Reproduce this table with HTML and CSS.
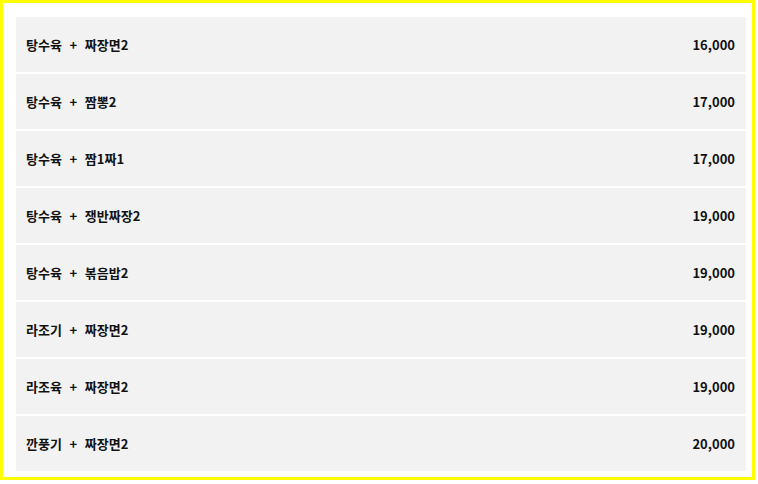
FILE: index.html
```html
<!DOCTYPE html>
<html lang="ko">
<head>
<meta charset="utf-8">
<link rel="stylesheet" href="styles.css">
</head>
<body>
<div class="frame">
  <ul class="menu">
    <li class="item"><span class="name">탕수육 + 짜장면2</span><span class="price">16,000</span></li>
    <li class="item"><span class="name">탕수육 + 짬뽕2</span><span class="price">17,000</span></li>
    <li class="item"><span class="name">탕수육 + 짬1짜1</span><span class="price">17,000</span></li>
    <li class="item"><span class="name">탕수육 + 쟁반짜장2</span><span class="price">19,000</span></li>
    <li class="item"><span class="name">탕수육 + 볶음밥2</span><span class="price">19,000</span></li>
    <li class="item"><span class="name">라조기 + 짜장면2</span><span class="price">19,000</span></li>
    <li class="item"><span class="name">라조육 + 짜장면2</span><span class="price">19,000</span></li>
    <li class="item"><span class="name">깐풍기 + 짜장면2</span><span class="price">20,000</span></li>
  </ul>
</div>
</body>
</html>
```

FILE: styles.css
```css
html, body {
  margin: 0;
  padding: 0;
  background: #ffffff;
}
body {
  font-family: "Noto Sans CJK KR", "Noto Sans", sans-serif;
  color: #111111;
}
.frame {
  box-sizing: border-box;
  width: 755px;
  height: 480px;
  border: 3px solid #ffff00;
  padding: 14px 6px 5px 13px;
}
.menu {
  list-style: none;
  margin: 0;
  padding: 0;
  display: flex;
  flex-direction: column;
  gap: 2px;
}
.item {
  height: 55px;
  background: #f2f2f2;
  display: flex;
  align-items: center;
  justify-content: space-between;
  padding: 0 11px 0 10px;
  font-size: 13px;
  font-weight: 700;
}
.name {
  word-spacing: 4px;
}
```
